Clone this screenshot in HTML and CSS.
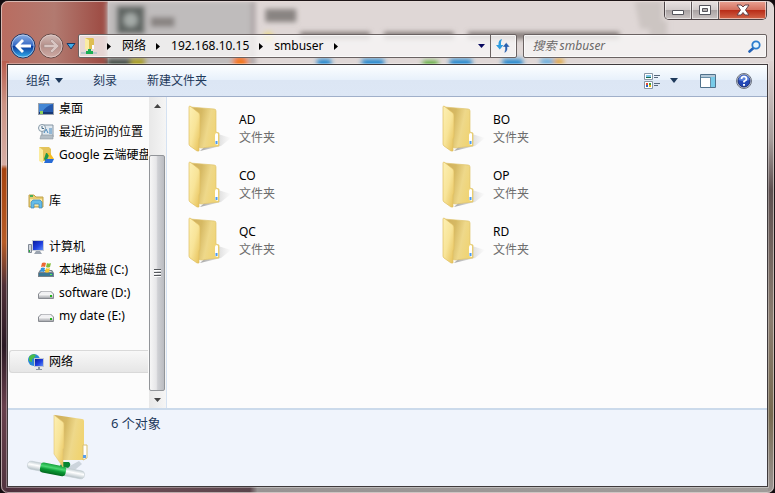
FILE: index.html
```html
<!DOCTYPE html>
<html lang="zh-CN">
<head>
<meta charset="utf-8">
<title>smbuser</title>
<link rel="stylesheet" href="styles.css">
</head>
<body>
<svg class="defs" aria-hidden="true">
  <defs>
    <linearGradient id="flap" x1="0" y1="0" x2="1" y2="1"><stop offset="0" stop-color="#fdf0b4"/><stop offset=".5" stop-color="#f8e498"/><stop offset="1" stop-color="#e5bf55"/></linearGradient>
    <linearGradient id="back" x1="0" y1="0" x2="1" y2=".3"><stop offset="0" stop-color="#cfae5c"/><stop offset=".4" stop-color="#d6b963"/><stop offset=".7" stop-color="#eed88a"/><stop offset="1" stop-color="#f0d474"/></linearGradient>
    <linearGradient id="shade" x1="0" y1="0" x2="1" y2="0"><stop offset="0" stop-color="#777" stop-opacity=".65"/><stop offset="1" stop-color="#999" stop-opacity="0"/></linearGradient>
    <linearGradient id="tube" x1="0" y1="0" x2="0" y2="1"><stop offset="0" stop-color="#c3ced3"/><stop offset=".4" stop-color="#fff"/><stop offset="1" stop-color="#b4c0c6"/></linearGradient>
    <linearGradient id="green" x1="0" y1="0" x2="0" y2="1"><stop offset="0" stop-color="#16a13c"/><stop offset=".35" stop-color="#4bd873"/><stop offset=".6" stop-color="#0a9a35"/><stop offset="1" stop-color="#02691e"/></linearGradient>
    <linearGradient id="screen" x1="0" y1="0" x2="1" y2="1"><stop offset="0" stop-color="#0b1c9b"/><stop offset=".55" stop-color="#1f3fe0"/><stop offset="1" stop-color="#5f8df5"/></linearGradient>
    <linearGradient id="blue" x1="0" y1="0" x2="0" y2="1"><stop offset="0" stop-color="#8fb2e6"/><stop offset=".48" stop-color="#3568c4"/><stop offset=".5" stop-color="#0b3699"/><stop offset="1" stop-color="#33b4f2"/></linearGradient>
    <linearGradient id="glass" x1="0" y1="0" x2="0" y2="1"><stop offset="0" stop-color="#d3bdb9"/><stop offset=".5" stop-color="#b58f89"/><stop offset="1" stop-color="#cfaca6"/></linearGradient>
    <linearGradient id="drivebody" x1="0" y1="0" x2="0" y2="1"><stop offset="0" stop-color="#fff"/><stop offset="1" stop-color="#a7a9ae"/></linearGradient>
    <symbol id="folder" viewBox="0 0 44 48">
      <path d="M30 29L43 33 33 41 12 46z" fill="url(#shade)"/>
      <path d="M2 2L26 4Q28 4 28 6V27L31 28V41L13 43 10 42z" fill="url(#back)" stroke="#dfc46e" stroke-width=".7"/>
      <path d="M27 30Q27 28 29 28L30 29V40L27 39z" fill="#fff"/>
      <path d="M27.500 36h2v3h-2z" fill="#4b9af0"/>
      <path d="M1 2Q1 1 2 1L11 8Q12 9 12 11V32L11 34V46L9 46 2 41Q1 40 1 39z" fill="url(#flap)" stroke="#dfbf61" stroke-width=".7"/>
    </symbol>
    <symbol id="disk" viewBox="0 0 16 16">
      <path d="M3 6h10l3 3v4q0 1-1 1H1q-1 0-1-1V9z" fill="#888b91"/>
      <path d="M3.500 6.500h9L15 9H1z" fill="#f1f1f3"/>
      <path d="M1 9h14v4H1z" fill="url(#drivebody)"/>
      <path d="M12 10h2v2h-2z" fill="#24b31e"/>
    </symbol>
  </defs>
</svg>
<div class="window">
  <svg class="backdrop" viewBox="0 0 775 493" preserveAspectRatio="none" aria-hidden="true">
    <defs>
      <filter id="soft" x="-20%" y="-50%" width="140%" height="200%"><feGaussianBlur stdDeviation="2.500"/></filter>
      <linearGradient id="red" x1="0" y1="0" x2="1" y2="0"><stop offset="0" stop-color="#b96c60"/><stop offset=".5" stop-color="#b27a70"/><stop offset="1" stop-color="#9c4840"/></linearGradient>
      <linearGradient id="side" x1="0" y1="0" x2="0" y2="1"><stop offset="0" stop-color="#b95d4d"/><stop offset=".1" stop-color="#cc9485"/><stop offset=".24" stop-color="#d6aea5"/><stop offset=".25" stop-color="#a64310"/><stop offset=".42" stop-color="#b75c27"/><stop offset=".52" stop-color="#503038"/><stop offset=".66" stop-color="#2a1924"/><stop offset=".8" stop-color="#68404c"/><stop offset="1" stop-color="#51343f"/></linearGradient>
      <linearGradient id="rside" x1="0" y1="0" x2="0" y2="1"><stop offset="0" stop-color="#ddd3d2"/><stop offset=".18" stop-color="#a79e9c"/><stop offset=".3" stop-color="#5e5050"/><stop offset=".6" stop-color="#8b7d70"/><stop offset=".82" stop-color="#776a50"/><stop offset="1" stop-color="#9c9594"/></linearGradient>
      <linearGradient id="foot" x1="0" y1="0" x2="1" y2="0"><stop offset="0" stop-color="#4d2f3c"/><stop offset=".14" stop-color="#6e4c55"/><stop offset=".32" stop-color="#5a444b"/><stop offset=".33" stop-color="#989393"/><stop offset="1" stop-color="#a09c9a"/></linearGradient>
    </defs>
    <path d="M0 0h775v493H0z" fill="#dfd7d6"/>
    <path d="M0 0h107v66H0z" fill="url(#red)"/>
    <g filter="url(#soft)">
      <path d="M106 0h148v66H106z" fill="#bfbcbc"/>
      <path d="M251 0h4v66h-4z" fill="#a89fa0"/>
      <path d="M116 5h28v28h-28z" fill="#626765"/>
      <circle cx="130" cy="19" r="7" fill="#a4aaa7"/>
      <path d="M150 16h24v10h-24zM265 8h31v13h-31z" fill="#898482"/>
      <path d="M300 31h70v7h-70zM384 31h70v7h-70zM468 31h152v7H468z" fill="#837a78"/>
      <path d="M106 57h24v12h-24z" fill="#4c554e"/><path d="M130 56h15v12h-15z" fill="#aaa02c"/>
      <circle cx="240" cy="62" r="8" fill="#f37a23"/><circle cx="268" cy="36" r="5" fill="#edda80"/>
      <path d="M317 58h14v10h-14zM362 58h22v10h-22zM450 58h22v10h-22zM503 58h20v10h-20z" fill="#2589cf"/>
      <path d="M423 60h15v8h-15z" fill="#57ab32"/><path d="M541 58h14v6h-14z" fill="#5daadf"/><path d="M554 58h10v6h-10z" fill="#e0a336"/>
      <path d="M635 0h28v28h-22zM650 20h18v18h-18z" fill="#ccc5c2"/>
    </g>
    <path d="M0 60h8v433H0z" fill="url(#side)"/>
    <path d="M767 60h8v433h-8z" fill="url(#rside)"/>
    <path d="M5 485h764v8H5z" fill="url(#foot)"/>
  </svg>
  <div class="caption">
    <button class="cap" aria-label="最小化"><svg width="14" height="12" viewBox="0 0 14 12"><path d="M1.500 6.500h11v4h-11z" fill="#fff" stroke="#55545c"/></svg></button>
    <button class="cap" aria-label="最大化"><svg width="14" height="12" viewBox="0 0 14 12"><path d="M1.500 1.500h11v9h-11z" fill="#fff" stroke="#55545c"/><path d="M4.500 4.500h5v3h-5z" fill="#b6afaf" stroke="#55545c"/></svg></button>
    <button class="cap close" aria-label="关闭"><svg width="14" height="12" viewBox="0 0 14 12"><path d="M1 1h4l2 2 2-2h4L9.500 6 13 11H9L7 8.500 5 11H1l3.500-5z" fill="#fff" stroke="#66454c"/></svg></button>
  </div>
  <nav class="navbar" aria-label="地址">
    <div class="history">
      <button aria-label="后退"><svg width="26" height="26" viewBox="0 0 26 26"><circle cx="13" cy="13" r="12" fill="url(#blue)" stroke="#26365f"/><circle cx="13" cy="13" r="11" fill="none" stroke="#c6d8f1" stroke-opacity=".7"/><path d="M5 13l7-7 2 2-3.500 3.500H21v3H10.500L14 18l-2 2z" fill="#fff"/></svg></button>
      <button aria-label="前进"><svg width="26" height="26" viewBox="0 0 26 26"><circle cx="13" cy="13" r="12" fill="url(#glass)" stroke="#684b48"/><circle cx="13" cy="13" r="11" fill="none" stroke="#e4d1ce" stroke-opacity=".7"/><path d="M21 13l-7-7-2 2 3.500 3.500H6v3h9.500L12 18l2 2z" fill="#d8c5c2" stroke="#a48b88" stroke-width=".6"/></svg></button>
      <button aria-label="最近的页面"><svg width="10" height="7" viewBox="0 0 10 7"><path d="M1 .5h8L5 6z" fill="#40acea" stroke="#173968"/></svg></button>
    </div>
    <div class="address">
      <svg class="place" width="16" height="18" viewBox="0 0 16 18"><path d="M4 1h8l1 1v10H4z" fill="#dfbe53"/><path d="M4 1l4 2v11l-4-2z" fill="#faeca6"/><path d="M11 8h2v4h-2z" fill="#fff"/><path d="M0 15h16v2H0z" fill="#bac8cc"/><path d="M7 12h3v2h2v3H5v-3h2z" fill="#1bae53"/></svg>
      <svg class="sep" width="4" height="7" viewBox="0 0 4 7"><path d="M0 0l4 3.500L0 7z"/></svg>
      <button class="crumb">网络</button>
      <svg class="sep" width="4" height="7" viewBox="0 0 4 7"><path d="M0 0l4 3.500L0 7z"/></svg>
      <button class="crumb">192.168.10.15</button>
      <svg class="sep" width="4" height="7" viewBox="0 0 4 7"><path d="M0 0l4 3.500L0 7z"/></svg>
      <button class="crumb">smbuser</button>
      <svg class="sep" width="4" height="7" viewBox="0 0 4 7"><path d="M0 0l4 3.500L0 7z"/></svg>
      <button class="drop" aria-label="以前的位置"><svg width="7" height="4" viewBox="0 0 7 4"><path d="M0 0h7L3.500 4z" fill="#08085f"/></svg></button>
      <button class="refresh" aria-label="刷新"><svg width="14" height="14" viewBox="0 0 14 14"><path d="M6 0Q2 1 2.500 6H0l3.800 4.500L7.500 6H5Q4.500 3 6 0z" fill="#2e9de0"/><path d="M8 14q4-1 3.500-6H14l-3.800-4.500L6.500 8H9q.5 3-1 6z" fill="#285faf" stroke="#f3f1f1" stroke-width=".5"/></svg></button>
    </div>
    <div class="search">
      <input type="text" aria-label="搜索" placeholder="搜索 smbuser">
      <svg width="13" height="13" viewBox="0 0 13 13"><path d="M6 7.500L1.500 11.500" stroke="#2362b7" stroke-width="2.600" stroke-linecap="round"/><circle cx="8" cy="5" r="3.700" fill="#e8f6fd" stroke="#2c7dce" stroke-width="1.800"/></svg>
    </div>
  </nav>
  <div class="client">
    <div class="toolbar">
      <button>组织 <svg width="8" height="5" viewBox="0 0 8 5"><path d="M0 0h8L4 5z" fill="#1e395b"/></svg></button>
      <button>刻录</button>
      <button>新建文件夹</button>
      <span class="tools">
        <button aria-label="更改视图"><svg width="17" height="16" viewBox="0 0 17 16"><path d="M.5.500h8v6h-8zM.5 8.500h8v7h-8z" fill="#fff" stroke="#8796a5"/><path d="M2 2h5v2H2z" fill="#7bc4e8"/><path d="M2 4h5v1H2z" fill="#176a49"/><path d="M2 10h2v2H2z" fill="#e3472d"/><path d="M5 10h2v2H5z" fill="#3b9a44"/><path d="M2 12h2v2H2z" fill="#2962be"/><path d="M5 12h2v2H5z" fill="#efb20b"/><path d="M10 2.500h6M10 4.500h4M10 10.500h6M10 12.500h4" stroke="#58697d"/></svg></button>
        <button aria-label="更多选项"><svg width="8" height="5" viewBox="0 0 8 5"><path d="M0 0h8L4 5z" fill="#1e395b"/></svg></button>
        <button class="pane" aria-label="显示预览窗格"><svg width="16" height="14" viewBox="0 0 16 14"><path d="M.5.500h15v13H.5z" fill="#fff" stroke="#50718b"/><path d="M1 1h14v2H1z" fill="#b1c7d8"/><path d="M10 3h5v10h-5z" fill="#78cbe9"/><path d="M1 3.500h9.500V13" fill="none" stroke="#688da6"/></svg></button>
        <button aria-label="获取帮助"><svg width="16" height="16" viewBox="0 0 16 16"><circle cx="8" cy="8" r="7.500" fill="#cbd0d9" stroke="#6d7482"/><circle cx="8" cy="8" r="6" fill="#2348b6" stroke="#1b2d70"/><path d="M2.500 7a5.500 5 0 0 1 11 0Q8 9 2.500 7z" fill="#5b82dc"/><path d="M5.500 6q0-2.500 2.500-2.500T10.500 6Q10.500 7.200 8 8.500v1" fill="none" stroke="#fff" stroke-width="1.700"/><path d="M7 11h2v1.800H7z" fill="#fff"/></svg></button>
      </span>
    </div>
    <div class="content">
      <aside class="tree">
        <a class="node child" href="#"><svg width="16" height="16" viewBox="0 0 16 16"><path d="M0 2h16v12H0z" fill="#9aa1ab"/><path d="M1 3h14v10H1z" fill="#2459ae"/><path d="M1 3h14Q8 5 4 11H1z" fill="#4487d5"/><path d="M1 11h14v2H1z" fill="#163877"/><path d="M2 10h3v3H2z" fill="#8dd05a"/></svg>桌面</a>
        <a class="node child" href="#"><svg width="16" height="16" viewBox="0 0 16 16"><path d="M4 1h11v12H4z" fill="#dfe8ef" stroke="#8494a2"/><path d="M6 9l2-4 2 4M11 5h3M11 7h3M11 9h3" fill="none" stroke="#4486bb"/><path d="M3 11h12v4H2z" fill="#b3bdc5" stroke="#8d979f" stroke-width=".6"/><circle cx="4" cy="4" r="3.500" fill="#f2f6f8" stroke="#879aa8"/><path d="M4 2v2.500h2" fill="none" stroke="#466b85"/></svg>最近访问的位置</a>
        <a class="node child" href="#"><svg width="16" height="16" viewBox="0 0 16 16"><path d="M1 0h10l2 2v12H2z" fill="#e4c45b"/><path d="M1 0l4 3v13l-4-2z" fill="#fbec9f"/><path d="M8 6h4l-4 9-2-3z" fill="#20984a"/><path d="M9 6h3l4 6h-3z" fill="#f7bd22"/><path d="M8 12h8l-2 4H6z" fill="#286bd5"/></svg>Google 云端硬盘</a>
        <a class="node group" href="#"><svg width="16" height="16" viewBox="0 0 16 16"><path d="M1 2h5l2 2h7v10H1z" fill="#e9cc70" stroke="#c0a24b"/><path d="M2 2h3v2H2z" fill="#48ae5a"/><path d="M2 6h12v7H2z" fill="#f8e8a8"/><path d="M3 15V9l2-2h7l2 2v6h-3v-4H6v4z" fill="#65bce8" stroke="#3a85b8" stroke-width=".7"/></svg>库</a>
        <a class="node group" href="#"><svg width="16" height="16" viewBox="0 0 16 16"><path d="M.5 5.500h3v8h-3z" fill="#d1d6de" stroke="#818995"/><path d="M1 11h1v2H1z" fill="#25b437"/><path d="M4 1h12v11H4z" fill="#c6ccd5"/><path d="M5 2h10v9H5z" fill="url(#screen)"/><path d="M8 12h4l2 3H6z" fill="#9aa3af"/></svg>计算机</a>
        <a class="node child" href="#"><svg width="16" height="16" viewBox="0 0 16 16"><path d="M2 8h12l2 3v4H0v-4z" fill="#78828a"/><path d="M1 11h14v3H1z" fill="#3b7895"/><path d="M3 9h10l1 1H2z" fill="#cfd7dd"/><path d="M12 12h2v1h-2z" fill="#55ef57"/><path d="M4 1q2-1 4 0L7 5Q5 4 3 5z" fill="#ed6732"/><path d="M9 1q2 1 4 0l-1 4q-2 1-4 0z" fill="#82bd39"/><path d="M3 6q2-1 4 0L6 10Q4 9 2 10z" fill="#3493db"/><path d="M8 6q2 1 4 0l-1 4q-2 1-4 0z" fill="#f7c62c"/></svg>本地磁盘 (C:)</a>
        <a class="node child" href="#"><svg width="16" height="16"><use href="#disk"/></svg>software (D:)</a>
        <a class="node child" href="#"><svg width="16" height="16"><use href="#disk"/></svg>my date (E:)</a>
        <a class="node group selected" href="#"><svg width="16" height="16" viewBox="0 0 16 16"><circle cx="6" cy="6" r="6" fill="#2886d8"/><path d="M1 3q3-4 7-2L6 4 4 5v3L1 7zM7 5h4v2L8 9z" fill="#49bc48"/><path d="M6 4h10v9H6z" fill="#c1c7d3"/><path d="M7 5h8v7H7z" fill="url(#screen)"/><path d="M10 13h2v2h2v1H8v-1h2z" fill="#8893a2"/></svg>网络</a>
      </aside>
      <div class="scroll">
        <button aria-label="向上滚动"><svg width="7" height="4" viewBox="0 0 7 4"><path d="M0 4h7L3.500 0z" fill="#444"/></svg></button>
        <div class="thumb"><i></i></div>
        <button aria-label="向下滚动"><svg width="7" height="4" viewBox="0 0 7 4"><path d="M0 0h7L3.500 4z" fill="#444"/></svg></button>
      </div>
      <main class="files">
        <a class="file" href="#"><svg width="44" height="48"><use href="#folder"/></svg><span><b>AD</b><small>文件夹</small></span></a>
        <a class="file" href="#"><svg width="44" height="48"><use href="#folder"/></svg><span><b>BO</b><small>文件夹</small></span></a>
        <a class="file" href="#"><svg width="44" height="48"><use href="#folder"/></svg><span><b>CO</b><small>文件夹</small></span></a>
        <a class="file" href="#"><svg width="44" height="48"><use href="#folder"/></svg><span><b>OP</b><small>文件夹</small></span></a>
        <a class="file" href="#"><svg width="44" height="48"><use href="#folder"/></svg><span><b>QC</b><small>文件夹</small></span></a>
        <a class="file" href="#"><svg width="44" height="48"><use href="#folder"/></svg><span><b>RD</b><small>文件夹</small></span></a>
      </main>
    </div>
    <footer class="details">
      <svg width="64" height="68" viewBox="0 0 64 68">
        <path d="M38 55l15-8 3 3-12 10z" fill="#ccd4dc"/>
        <path d="M29 1l27 4q2 0 2 2v39L36 46z" fill="url(#back)"/>
        <path d="M57 31h4v13l-4 2z" fill="#fff" stroke="#d9bf70"/><path d="M57 41h3v3h-3z" fill="#5b9fe9"/>
        <path d="M36 48h7q3 3-1 6h-9z" fill="#078532"/>
        <g transform="rotate(11 30 56)"><rect x="1" y="52" width="58" height="8" rx="4" fill="url(#tube)" stroke="#c4ced2" stroke-width=".6"/><rect x="14" y="51" width="26" height="10" rx="3" fill="url(#green)"/></g>
        <path d="M28 1l9 7q1 1 1 3v23l-1 1v18l-9-13z" fill="url(#flap)" stroke="#e3c570" stroke-width=".6"/>
      </svg>
      <p>6 个对象</p>
    </footer>
  </div>
</div>
</body>
</html>
```
FILE: styles.css
```css
* { box-sizing: border-box; }

body {
  margin: 0;
  background: #120b0f;
  color: #000;
  font: 12px/18px "Noto Sans", "Noto Sans CJK SC", sans-serif;
}

button {
  display: flex;
  align-items: center;
  justify-content: center;
  padding: 0;
  border: 0;
  background: none;
  color: inherit;
  font: inherit;
}

a { color: inherit; text-decoration: none; }
svg { display: block; flex: none; }
.defs { position: absolute; width: 0; height: 0; }

.window {
  position: relative;
  display: flex;
  flex-direction: column;
  min-height: 100vh;
  padding: 0 7px 6px;
  border: 1px solid #1d1517;
  border-radius: 8px;
  overflow: hidden;
  isolation: isolate;
}

.window::after {
  content: "";
  position: absolute;
  inset: 0;
  border: 1px solid #e8dcdaaa;
  border-radius: 7px;
  pointer-events: none;
}

.backdrop {
  position: absolute;
  inset: 0;
  z-index: -1;
  width: 100%;
  height: 100%;
}

/* caption buttons */
.caption {
  display: flex;
  align-self: flex-end;
  height: 19px;
  margin-bottom: 14px;
  border: 1px solid #4c4346;
  border-top: 0;
  border-radius: 0 0 5px 5px;
  overflow: hidden;
}

.cap {
  width: 27px;
  border-right: 1px solid #5e5558;
  background: linear-gradient(#e8e2e2, #d2cbcb 48%, #aaa3a4 52%, #cbc4c4);
  box-shadow: inset 0 0 0 1px #ffffff88;
}

.cap.close {
  width: 47px;
  border-right: 0;
  background: linear-gradient(#e9a495, #d4715f 48%, #b92c18 52%, #d2664a);
}

/* navigation row */
.navbar {
  display: flex;
  align-items: center;
  height: 24px;
  margin-bottom: 6px;
}

.history {
  display: flex;
  align-items: center;
  gap: 2px;
  padding-left: 2px;
  margin-right: 2px;
}

.address, .search {
  display: flex;
  align-items: center;
  height: 24px;
  border: 1px solid #6a6262;
  border-radius: 2px;
  background: #f8f6f6cc;
  box-shadow: inset 0 0 0 1px #ffffffaa;
}

.address { flex: 9 1 0; }
.search { flex: 5 1 0; min-width: 0; margin-left: 6px; }
.search svg { margin-right: 5px; }
.place { margin: 0 8px 0 2px; }
.sep { margin: 0 2px; }
.crumb { padding: 0 8px 0 9px; }
.drop { width: 17px; height: 22px; margin-left: auto; }
.refresh { width: 26px; height: 22px; border-left: 1px solid #6a6262; }

.search input {
  flex: 1;
  min-width: 0;
  padding: 0 9px;
  border: 0;
  outline: 0;
  background: none;
  font: inherit;
}

.search input::placeholder {
  color: #6b6868;
  font-style: italic;
  opacity: 1;
}

/* client area */
.client {
  display: flex;
  flex: 1;
  flex-direction: column;
  border: 1px solid #3f3a3c;
  outline: 1px solid #ffffff55;
  background: #fcfcfc;
  margin: 0 -1px;
}

.toolbar {
  display: flex;
  align-items: center;
  gap: 30px;
  height: 32px;
  padding: 0 15px 0 18px;
  border-bottom: 1px solid #a0afc9;
  background: linear-gradient(#fcfeff, #e8f1fb 47%, #dce6f4 50%, #dde7f5);
  color: #1e395b;
}

.toolbar button { gap: 5px; }
.tools { display: flex; align-items: center; gap: 9px; margin-left: auto; }
.tools .pane { margin: 0 11px 0 13px; }

.content {
  display: flex;
  flex: 1;
  min-height: 311px;
}

.tree {
  flex: none;
  width: 140px;
  margin-right: 1px;
  overflow: hidden;
}

.node {
  display: flex;
  align-items: center;
  gap: 5px;
  height: 23px;
  padding-left: 20px;
  white-space: nowrap;
}

.node.child { padding-left: 30px; }
.node.group { margin-top: 23px; }

.node.selected {
  margin-left: 1px;
  padding-left: 18px;
  border: 1px solid #d9d9d9;
  border-right: 0;
  border-radius: 3px 0 0 3px;
  background: linear-gradient(#f8f8f8, #e6e6e6);
}

.scroll {
  display: flex;
  flex: none;
  flex-direction: column;
  width: 17px;
  padding-right: 1px;
  background: linear-gradient(90deg, #e8e8e8, #f5f5f5);
}

.scroll button { height: 17px; }

.thumb {
  display: grid;
  flex: 1;
  place-items: center;
  margin-top: 41px;
  border: 1px solid #929599;
  border-radius: 2px;
  background: linear-gradient(90deg, #f6f6f6, #e6e6e8 45%, #cfd0d4 55%, #babcc1);
}

.thumb i {
  width: 7px;
  height: 8px;
  background: repeating-linear-gradient(#55585c 0 1px, #fff 1px 2px, transparent 2px 3px);
}

.files {
  display: grid;
  flex: 1;
  grid-template-columns: repeat(auto-fill, 254px);
  grid-auto-rows: 56px;
  align-content: start;
  padding: 4px 4px 4px 21px;
  border-left: 1px solid #d5e2f2;
}

.file { display: flex; align-items: center; gap: 7px; }
.file b, .file small { display: block; font: inherit; }
.file small { color: #6d6d6d; }

.details {
  display: flex;
  gap: 21px;
  height: 78px;
  padding: 4px 18px;
  border-top: 2px solid #cbdaeb;
  background: #f0f4fc;
  color: #1e395b;
  font-size: 13px;
}

.details p { margin: 0; }
```
